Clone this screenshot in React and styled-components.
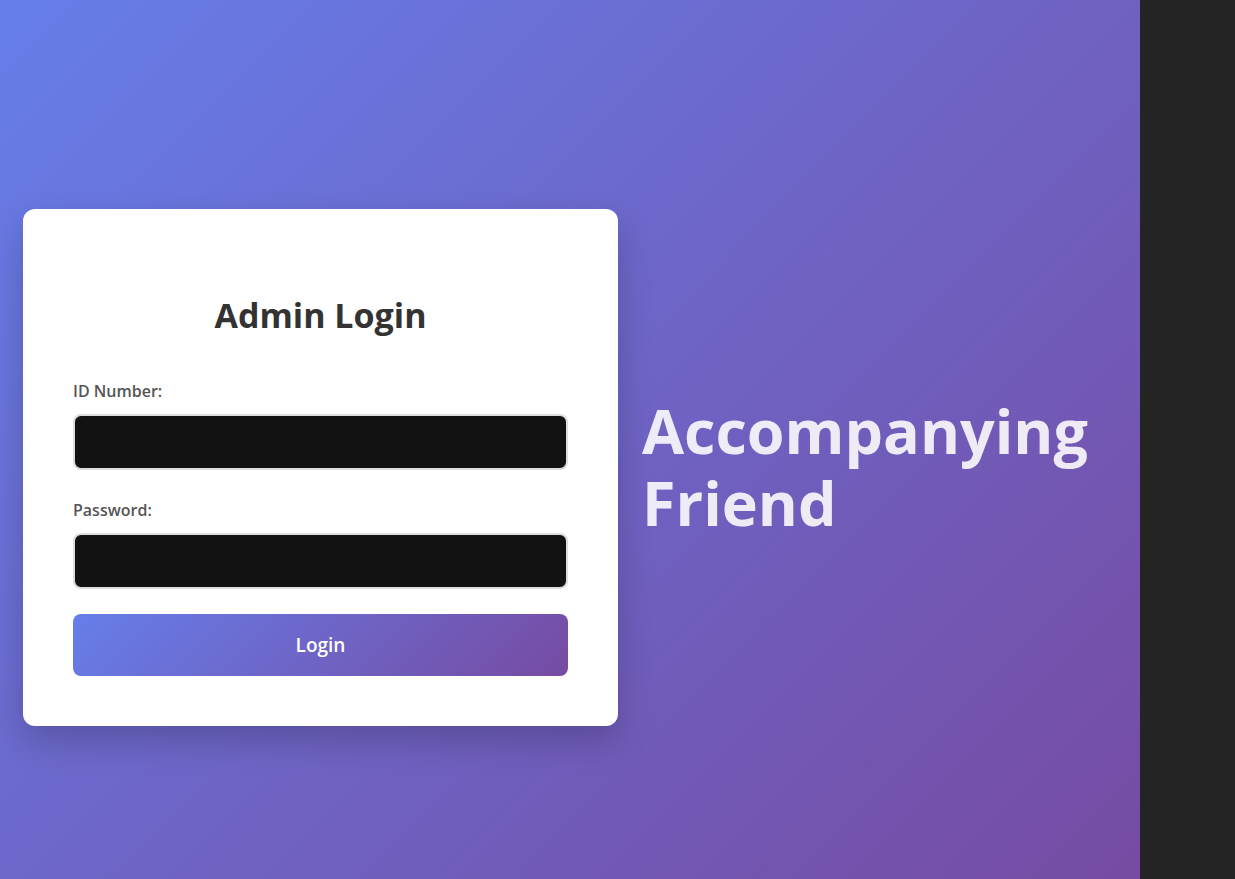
import React from 'react';
import styled, { createGlobalStyle } from 'styled-components';

const GlobalStyle = createGlobalStyle`
  * {
    box-sizing: border-box;
  }

  body {
    margin: 0;
    background-color: #242424;
    font-family: "Open Sans", "Noto Sans", sans-serif;
  }
`;

const Page = styled.div`
  width: 1140px;
  height: 879px;
  display: flex;
  align-items: center;
  gap: 24px;
  padding: 55px 0 0 23px;
  background: linear-gradient(135deg, #667eea 0%, #764ba2 100%);
`;

const Card = styled.div`
  width: 595px;
  padding: 50px;
  background-color: #fff;
  border-radius: 12px;
  box-shadow: 0 15px 35px rgba(0, 0, 0, 0.2);
`;

const Title = styled.h2`
  margin: 36px 0 46px;
  font-size: 34px;
  line-height: 40px;
  font-weight: 700;
  color: #333;
  text-align: center;
`;

const FormGroup = styled.div`
  margin-bottom: ${(props) => props.spacing || 30}px;
`;

const Label = styled.label`
  display: block;
  margin-bottom: 13px;
  font-size: 16px;
  line-height: 20px;
  font-weight: 600;
  color: #555;
`;

const Input = styled.input`
  display: block;
  width: 100%;
  height: 56px;
  padding: 0 16px;
  font-size: 16px;
  color: #fff;
  background-color: #121212;
  border: 2px solid #ddd;
  border-radius: 8px;
  outline: none;
`;

const Button = styled.button`
  display: block;
  width: 100%;
  height: 62px;
  font-family: inherit;
  font-size: 19px;
  font-weight: 600;
  color: #fff;
  background: linear-gradient(135deg, #667eea 0%, #764ba2 100%);
  border: none;
  border-radius: 8px;
  cursor: pointer;
`;

const Brand = styled.h1`
  margin: 0;
  font-size: 61px;
  line-height: 72px;
  font-weight: 700;
  color: rgba(255, 255, 255, 0.88);
`;

const App = () => {
  return (
    <>
      <GlobalStyle />
      <Page>
        <Card>
          <Title>Admin Login</Title>
          <form onSubmit={(e) => e.preventDefault()}>
            <FormGroup>
              <Label htmlFor="id">ID Number:</Label>
              <Input id="id" type="text" />
            </FormGroup>
            <FormGroup spacing={25}>
              <Label htmlFor="password">Password:</Label>
              <Input id="password" type="password" />
            </FormGroup>
            <Button type="submit">Login</Button>
          </form>
        </Card>
        <Brand>
          Accompanying
          <br />
          Friend
        </Brand>
      </Page>
    </>
  );
};

export default App;
